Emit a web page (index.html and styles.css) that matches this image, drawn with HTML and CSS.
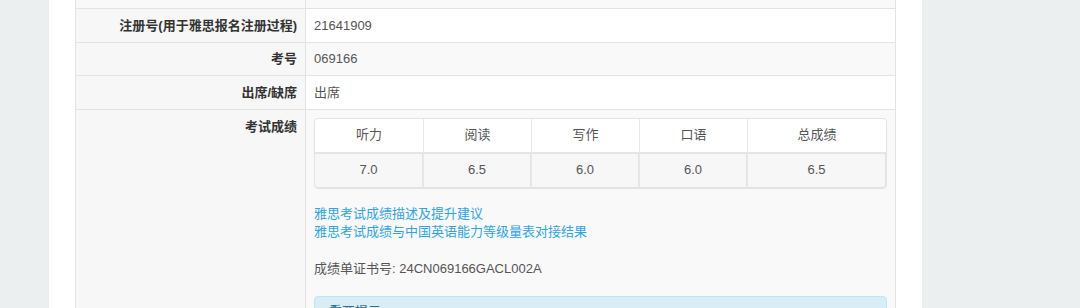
FILE: index.html
```html
<!DOCTYPE html>
<html lang="zh-CN">
<head>
<meta charset="utf-8">
<title>成绩</title>
<link rel="stylesheet" href="styles.css">
</head>
<body>
<div class="page">
  <div class="panel">
    <table class="info">
      <colgroup><col class="label-col"><col></colgroup>
      <tbody>
        <tr class="cut"><td class="label"></td><td class="value"></td></tr>
        <tr><td class="label">注册号(用于雅思报名注册过程)</td><td class="value">21641909</td></tr>
        <tr class="odd"><td class="label">考号</td><td class="value">069166</td></tr>
        <tr><td class="label">出席/缺席</td><td class="value">出席</td></tr>
        <tr class="odd">
          <td class="label">考试成绩</td>
          <td class="value">
            <table class="scores">
              <colgroup><col class="c"><col class="c"><col class="c"><col class="c"><col></colgroup>
              <thead>
                <tr><th>听力</th><th>阅读</th><th>写作</th><th>口语</th><th>总成绩</th></tr>
              </thead>
              <tbody>
                <tr><td>7.0</td><td>6.5</td><td>6.0</td><td>6.0</td><td>6.5</td></tr>
              </tbody>
            </table>
            <div class="links">
              <a href="#">雅思考试成绩描述及提升建议</a><br>
              <a href="#">雅思考试成绩与中国英语能力等级量表对接结果</a>
            </div>
            <p class="cert">成绩单证书号: 24CN069166GACL002A</p>
            <div class="alert">重要提示</div>
          </td>
        </tr>
      </tbody>
    </table>
  </div>
</div>
</body>
</html>
```

FILE: styles.css
```css
html, body {
  margin: 0;
  padding: 0;
  background: #ebeff0;
  font-family: "Liberation Sans", Arial, "Noto Sans CJK SC", sans-serif;
  font-size: 13px;
  line-height: 18.5px;
  color: #555555;
  overflow: hidden;
}

.page {
  display: flex;
  height: 308px;
}

.panel {
  margin-left: 49px;
  width: 821px;
  padding: 0 26px;
  background: #ffffff;
}

.info {
  width: 821px;
  border-collapse: collapse;
  table-layout: fixed;
  border-left: 1px solid #e3e3e3;
  border-right: 1px solid #e3e3e3;
}

.info col.label-col {
  width: 230px;
}

.info td {
  border: 1px solid #e3e3e3;
  padding: 7.6px 8px;
  line-height: 17.5px;
  vertical-align: top;
  background: #ffffff;
}

.info tr.cut td {
  border-top: none;
  height: 8px;
  padding: 0;
  background: #f9f9f9;
}

.info tr.odd td.value {
  background: #f9f9f9;
}

.info td.label {
  text-align: right;
  font-weight: bold;
  color: #333333;
  background: #f7f7f7;
}

.scores {
  width: 100%;
  border-collapse: separate;
  border-spacing: 0;
  border: 1px solid #e3e3e3;
  border-radius: 4px;
  margin: 0;
  table-layout: fixed;
}

.scores col.c {
  width: 108px;
}

.scores th,
.scores td {
  text-align: center;
  font-weight: normal;
  padding: 7.5px 8px;
  line-height: 18px;
  color: #555555;
  border-left: 1px solid #e8e8e8;
}

.scores th:first-child,
.scores td:first-child {
  border-left: none;
}

.scores th {
  background: #ffffff;
  border-bottom: 1px solid #e6e6e6;
}

.scores thead th:first-child { border-top-left-radius: 4px; }
.scores thead th:last-child { border-top-right-radius: 4px; }

.scores td {
  background: #f7f7f7;
}

.scores tbody td:first-child { border-bottom-left-radius: 4px; }
.scores tbody td:last-child { border-bottom-right-radius: 4px; }

.links {
  margin-top: 16px;
  line-height: 18.5px;
}

.links a {
  color: #2fa4e7;
  text-decoration: none;
}

.cert {
  margin: 18.5px 0 0 0;
  line-height: 18.5px;
}

.alert {
  margin-top: 17px;
  padding: 6px 14px;
  background: #d9edf7;
  border: 1px solid #bce8f1;
  border-radius: 4px;
  color: #31708f;
  line-height: 18.5px;
  height: 60px;
}
```
